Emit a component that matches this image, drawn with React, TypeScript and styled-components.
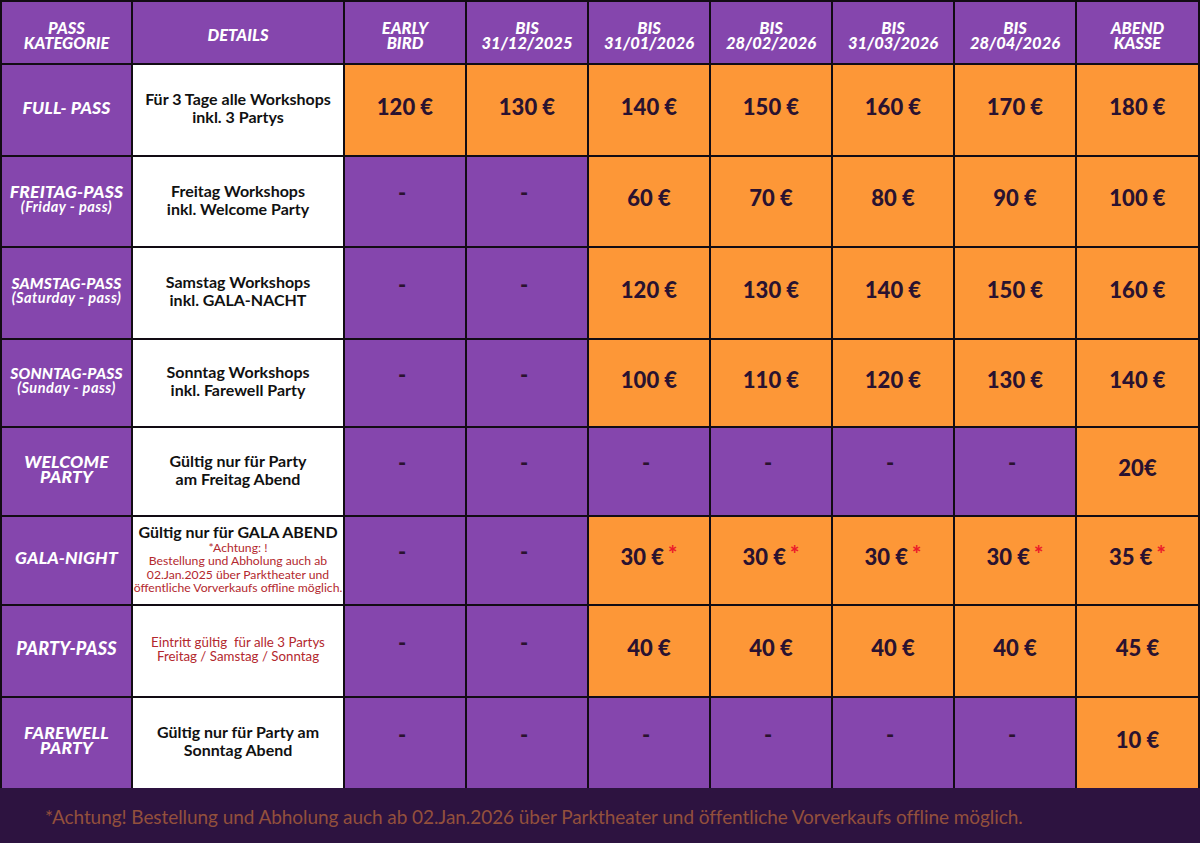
import React from "react";
import styled, { createGlobalStyle } from "styled-components";

const GlobalStyle = createGlobalStyle`
  html, body { margin: 0; padding: 0; background: #2d1340; }
  body { font-family: Lato, "Open Sans", sans-serif; }
`;

const PURPLE = "#8546ad";
const ORANGE = "#fd9737";
const INK = "#2a1230";
const LINE = "#120c14";

const Page = styled.div`
  width: 1200px;
  height: 843px;
  display: flex;
  flex-direction: column;
  overflow: hidden;
`;

const Table = styled.div`
  display: grid;
  grid-template-columns: 129px 210px 120px 120px 120px 120px 120px 120px 121px;
  grid-template-rows: 61px 90px 89px 90px 86px 87px 87px 90px 90px;
  gap: 2px;
  padding: 2px 2px 0 2px;
  background: ${LINE};
`;

const HeaderCell = styled.div`
  background: ${PURPLE};
  color: #fff;
  display: flex;
  flex-direction: column;
  align-items: center;
  justify-content: center;
  padding-top: 6px;
  font-weight: 900;
  font-style: italic;
  font-size: 16.5px;
  line-height: 14.5px;
  text-transform: uppercase;
  text-align: center;
`;

const HeaderLine = styled.span`
  display: block;
  white-space: nowrap;
`;

const LabelCell = styled.div`
  background: ${PURPLE};
  color: #fff;
  display: flex;
  flex-direction: column;
  align-items: center;
  justify-content: center;
  padding-bottom: 6px;
  font-weight: 900;
  font-style: italic;
  text-align: center;
`;

const LabelMain = styled.span<{ $size: number }>`
  display: block;
  white-space: nowrap;
  font-size: ${(p) => p.$size}px;
  line-height: ${(p) => Math.round(p.$size * 0.88)}px;
  letter-spacing: 0.2px;
`;

const LabelSub = styled.span`
  display: block;
  white-space: nowrap;
  font-size: 14.5px;
  line-height: 15px;
  font-weight: 700;
  letter-spacing: 0.5px;
`;

const DetailCell = styled.div`
  background: #fff;
  color: #111;
  display: flex;
  flex-direction: column;
  align-items: center;
  justify-content: center;
  padding-bottom: 4px;
  text-align: center;
`;

const DetailLine = styled.span`
  display: block;
  white-space: nowrap;
  font-weight: 700;
  font-size: 16px;
  line-height: 18px;
`;

const NoteLine = styled.span<{ $size: number; $lh: number }>`
  display: block;
  white-space: nowrap;
  color: #b3282e;
  font-size: ${(p) => p.$size}px;
  line-height: ${(p) => p.$lh}px;
`;

const PriceCell = styled.div<{ $tone: "orange" | "purple" }>`
  background: ${(p) => (p.$tone === "orange" ? ORANGE : PURPLE)};
  color: ${INK};
  display: flex;
  align-items: center;
  justify-content: center;
  padding-bottom: 8px;
  font-weight: 900;
  font-size: 22px;
`;

const Dash = styled.span`
  font-size: 22px;
  font-weight: 900;
  margin-bottom: 10px;
  margin-right: 6px;
`;

const Star = styled.span`
  color: #ec1c2a;
  font-size: 22px;
  margin-left: 4px;
  position: relative;
  top: -3px;
`;

const Footer = styled.div`
  flex: 1;
  background: #2d1340;
  display: flex;
  align-items: center;
  padding: 2px 0 0 45px;
  color: #93503c;
  font-size: 19px;
  letter-spacing: -0.07px;
`;

type Row = {
  label: string[];
  size: number;
  sub?: string;
  detail: React.ReactNode;
  prices: string[];
  star?: boolean;
};

const headers = [
  ["PASS", "KATEGORIE"],
  ["DETAILS"],
  ["EARLY", "BIRD"],
  ["BIS", "31/12/2025"],
  ["BIS", "31/01/2026"],
  ["BIS", "28/02/2026"],
  ["BIS", "31/03/2026"],
  ["BIS", "28/04/2026"],
  ["ABEND", "KASSE"],
];

const rows: Row[] = [
  {
    label: ["FULL- PASS"],
    size: 17.5,
    detail: (
      <>
        <DetailLine>Für 3 Tage alle Workshops</DetailLine>
        <DetailLine>inkl. 3 Partys</DetailLine>
      </>
    ),
    prices: ["120 €", "130 €", "140 €", "150 €", "160 €", "170 €", "180 €"],
  },
  {
    label: ["FREITAG-PASS"],
    size: 17.5,
    sub: "(Friday - pass)",
    detail: (
      <>
        <DetailLine>Freitag Workshops</DetailLine>
        <DetailLine>inkl. Welcome Party</DetailLine>
      </>
    ),
    prices: ["-", "-", "60 €", "70 €", "80 €", "90 €", "100 €"],
  },
  {
    label: ["SAMSTAG-PASS"],
    size: 15.5,
    sub: "(Saturday - pass)",
    detail: (
      <>
        <DetailLine>Samstag Workshops</DetailLine>
        <DetailLine>inkl. GALA-NACHT</DetailLine>
      </>
    ),
    prices: ["-", "-", "120 €", "130 €", "140 €", "150 €", "160 €"],
  },
  {
    label: ["SONNTAG-PASS"],
    size: 15.5,
    sub: "(Sunday - pass)",
    detail: (
      <>
        <DetailLine>Sonntag Workshops</DetailLine>
        <DetailLine>inkl. Farewell Party</DetailLine>
      </>
    ),
    prices: ["-", "-", "100 €", "110 €", "120 €", "130 €", "140 €"],
  },
  {
    label: ["WELCOME", "PARTY"],
    size: 17.5,
    detail: (
      <>
        <DetailLine>Gültig nur für Party</DetailLine>
        <DetailLine>am Freitag Abend</DetailLine>
      </>
    ),
    prices: ["-", "-", "-", "-", "-", "-", "20€"],
  },
  {
    label: ["GALA-NIGHT"],
    size: 17.5,
    detail: (
      <>
        <DetailLine>Gültig nur für GALA ABEND</DetailLine>
        <NoteLine $size={12.2} $lh={13.4}>*Achtung: !</NoteLine>
        <NoteLine $size={12.2} $lh={13.4}>Bestellung und Abholung auch ab</NoteLine>
        <NoteLine $size={12.2} $lh={13.4}>02.Jan.2025 über Parktheater und</NoteLine>
        <NoteLine $size={12.2} $lh={13.4}>öffentliche Vorverkaufs offline möglich.</NoteLine>
      </>
    ),
    prices: ["-", "-", "30 €", "30 €", "30 €", "30 €", "35 €"],
    star: true,
  },
  {
    label: ["PARTY-PASS"],
    size: 18,
    detail: (
      <>
        <NoteLine $size={13.3} $lh={14.5}>Eintritt gültig&nbsp; für alle 3 Partys</NoteLine>
        <NoteLine $size={13.3} $lh={14.5}>Freitag / Samstag / Sonntag</NoteLine>
      </>
    ),
    prices: ["-", "-", "40 €", "40 €", "40 €", "40 €", "45 €"],
  },
  {
    label: ["FAREWELL", "PARTY"],
    size: 17.5,
    detail: (
      <>
        <DetailLine>Gültig nur für Party am</DetailLine>
        <DetailLine>Sonntag Abend</DetailLine>
      </>
    ),
    prices: ["-", "-", "-", "-", "-", "-", "10 €"],
  },
];

export default function App() {
  return (
    <Page>
      <GlobalStyle />
      <Table>
        {headers.map((h, i) => (
          <HeaderCell key={i}>
            {h.map((l) => (
              <HeaderLine key={l}>{l}</HeaderLine>
            ))}
          </HeaderCell>
        ))}
        {rows.map((r, ri) => (
          <React.Fragment key={ri}>
            <LabelCell>
              {r.label.map((l) => (
                <LabelMain key={l} $size={r.size}>
                  {l}
                </LabelMain>
              ))}
              {r.sub && <LabelSub>{r.sub}</LabelSub>}
            </LabelCell>
            <DetailCell>{r.detail}</DetailCell>
            {r.prices.map((p, pi) =>
              p === "-" ? (
                <PriceCell key={pi} $tone="purple">
                  <Dash>-</Dash>
                </PriceCell>
              ) : (
                <PriceCell key={pi} $tone="orange">
                  {p}
                  {r.star && <Star>*</Star>}
                </PriceCell>
              )
            )}
          </React.Fragment>
        ))}
      </Table>
      <Footer>
        *Achtung! Bestellung und Abholung auch ab 02.Jan.2026 über Parktheater und öffentliche Vorverkaufs offline möglich.
      </Footer>
    </Page>
  );
}
